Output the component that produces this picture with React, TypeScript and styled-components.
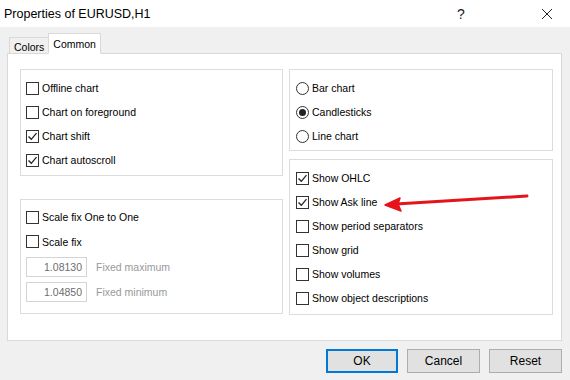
import React from "react";
import styled, { createGlobalStyle } from "styled-components";

const GlobalStyle = createGlobalStyle`
  html, body {
    margin: 0;
    padding: 0;
    background: #f0f0f0;
  }
  body {
    font-family: "Liberation Sans", Arial, sans-serif;
    font-size: 10.5px;
    color: #000;
  }
`;

const Window = styled.div`
  position: relative;
  width: 570px;
  height: 380px;
  background: #f0f0f0;
  overflow: hidden;
`;

const TitleBar = styled.div`
  height: 27px;
  background: #fff;
  display: flex;
  align-items: center;
  padding-left: 4px;
  font-size: 12.5px;
  color: #000;
`;

const TitleText = styled.div`
  flex: 1;
`;

const TitleButton = styled.div`
  width: 46px;
  height: 27px;
  display: flex;
  align-items: center;
  justify-content: center;
  font-size: 14px;
  color: #222;
`;

const Body = styled.div`
  padding: 6px 8px 0 7px;
`;

const TabStrip = styled.div`
  display: flex;
  align-items: flex-end;
  height: 21px;
  padding-left: 2px;
  position: relative;
  z-index: 1;
  margin-bottom: -1px;
`;

const Tab = styled.div<{ $active?: boolean }>`
  height: ${(p) => (p.$active ? "21px" : "17px")};
  padding: 0 4px;
  padding-top: ${(p) => (p.$active ? "0" : "2px")};
  border: 1px solid #d9d9d9;
  border-bottom: 1px solid ${(p) => (p.$active ? "#fff" : "#d9d9d9")};
  background: ${(p) => (p.$active ? "#fff" : "#f0f0f0")};
  display: flex;
  align-items: center;
  box-sizing: border-box;
  margin-left: ${(p) => (p.$active ? "-1px" : "0")};
`;

const Page = styled.div`
  height: 288px;
  box-sizing: border-box;
  background: #fff;
  border: 1px solid #d9d9d9;
  display: grid;
  grid-template-columns: 263px 264px;
  column-gap: 6px;
  padding: 15px 0 0 12px;
`;

const Column = styled.div<{ $gap: number }>`
  display: flex;
  flex-direction: column;
  gap: ${(p) => p.$gap}px;
`;

const Group = styled.div<{ $h: number; $pl: number; $pt: number }>`
  height: ${(p) => p.$h}px;
  box-sizing: border-box;
  border: 1px solid #dcdcdc;
  padding: ${(p) => p.$pt}px 0 0 ${(p) => p.$pl}px;
  display: flex;
  flex-direction: column;
`;

const Row = styled.div<{ $h?: number }>`
  height: ${(p) => p.$h ?? 24}px;
  display: flex;
  align-items: center;
  gap: 3px;
`;

const Box = styled.span`
  width: 13px;
  height: 13px;
  box-sizing: border-box;
  border: 1px solid #333;
  background: #fff;
  display: inline-flex;
  align-items: center;
  justify-content: center;
`;

const Radio = styled.span`
  width: 13px;
  height: 13px;
  box-sizing: border-box;
  border: 1px solid #333;
  border-radius: 50%;
  background: #fff;
  display: inline-flex;
  align-items: center;
  justify-content: center;
`;

const Dot = styled.span`
  width: 7px;
  height: 7px;
  border-radius: 50%;
  background: #222;
`;

const Field = styled.div`
  width: 61px;
  height: 20px;
  box-sizing: border-box;
  border: 1px solid #d4d4d4;
  color: #6d6d6d;
  display: flex;
  align-items: center;
  justify-content: flex-end;
  padding-right: 4px;
  margin-right: 6px;
`;

const Muted = styled.span`
  color: #999;
`;

const ButtonRow = styled.div`
  display: flex;
  justify-content: flex-end;
  gap: 9px;
  padding-top: 8px;
`;

const Button = styled.div<{ $default?: boolean }>`
  width: ${(p) => (p.$default ? "72px" : "73px")};
  height: 24px;
  box-sizing: border-box;
  border: ${(p) => (p.$default ? "2px solid #0078d7" : "1px solid #adadad")};
  background: #e1e1e1;
  display: flex;
  align-items: center;
  justify-content: center;
  font-size: 12px;
`;

const Arrow = styled.svg`
  position: absolute;
  left: 0;
  top: 0;
  pointer-events: none;
`;

const Check = ({ on }: { on?: boolean }) => (
  <Box>
    {on && (
      <svg width="11" height="11" viewBox="0 0 11 11">
        <path d="M1.5 5.5 L4.3 8.3 L9.5 2.2" fill="none" stroke="#222" strokeWidth="1.3" />
      </svg>
    )}
  </Box>
);

const CheckRow = ({ label, on }: { label: string; on?: boolean }) => (
  <Row>
    <Check on={on} />
    <span>{label}</span>
  </Row>
);

const RadioRow = ({ label, on }: { label: string; on?: boolean }) => (
  <Row>
    <Radio>{on && <Dot />}</Radio>
    <span>{label}</span>
  </Row>
);

const App = () => {
  return (
    <Window>
      <GlobalStyle />
      <TitleBar>
        <TitleText>Properties of EURUSD,H1</TitleText>
        <TitleButton>?</TitleButton>
        <TitleButton style={{ marginLeft: 40 }}>
          <svg width="12" height="12" viewBox="0 0 12 12">
            <path d="M1 1 L11 11 M11 1 L1 11" stroke="#222" strokeWidth="1" />
          </svg>
        </TitleButton>
      </TitleBar>
      <Body>
        <TabStrip>
          <Tab>Colors</Tab>
          <Tab $active>Common</Tab>
        </TabStrip>
        <Page>
          <Column $gap={23}>
            <Group $h={107} $pl={5} $pt={6}>
              <CheckRow label="Offline chart" />
              <CheckRow label="Chart on foreground" />
              <CheckRow label="Chart shift" on />
              <CheckRow label="Chart autoscroll" on />
            </Group>
            <Group $h={115} $pl={5} $pt={5}>
              <CheckRow label="Scale fix One to One" />
              <Row $h={25}>
                <Check />
                <span>Scale fix</span>
              </Row>
              <Row $h={26}>
                <Field>1.08130</Field>
                <Muted>Fixed maximum</Muted>
              </Row>
              <Row $h={24}>
                <Field>1.04850</Field>
                <Muted>Fixed minimum</Muted>
              </Row>
            </Group>
          </Column>
          <Column $gap={8}>
            <Group $h={82} $pl={6} $pt={6}>
              <RadioRow label="Bar chart" />
              <RadioRow label="Candlesticks" on />
              <RadioRow label="Line chart" />
            </Group>
            <Group $h={156} $pl={6} $pt={6}>
              <CheckRow label="Show OHLC" on />
              <CheckRow label="Show Ask line" on />
              <CheckRow label="Show period separators" />
              <CheckRow label="Show grid" />
              <CheckRow label="Show volumes" />
              <CheckRow label="Show object descriptions" />
            </Group>
          </Column>
        </Page>
        <ButtonRow>
          <Button $default>OK</Button>
          <Button>Cancel</Button>
          <Button>Reset</Button>
        </ButtonRow>
      </Body>
      <Arrow width="570" height="380" viewBox="0 0 570 380">
        <path d="M527 196 L396 204" stroke="#e5141c" strokeWidth="3" strokeLinecap="round" />
        <path d="M385 205 L400 198 L398 204 L401 211 Z" fill="#e5141c" stroke="#e5141c" strokeWidth="1.5" strokeLinejoin="round" />
      </Arrow>
    </Window>
  );
};

export default App;
